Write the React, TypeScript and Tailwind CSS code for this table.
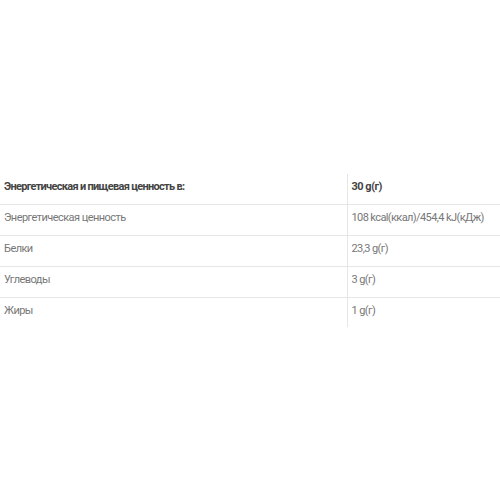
const rows = [
  ["Энергетическая ценность", "108 kcal(ккал)/454,4 kJ(кДж)"],
  ["Белки", "23,3 g(г)"],
  ["Углеводы", "3 g(г)"],
  ["Жиры", "1 g(г)"],
];

export default function App() {
  return (
    <div className="w-[500px] h-[500px] bg-white pt-[174px]" style={{ fontFamily: "Roboto, 'Noto Sans', sans-serif" }}>
      <table className="w-full border-collapse text-[11px] leading-[13px]">
        <tbody>
          <tr className="h-[30px] border-b border-[#e6e6e6]">
            <td className="w-[347px] align-top pl-1 pt-[6px] font-bold text-[#444] tracking-[-0.7px]">
              Энергетическая и пищевая ценность в:
            </td>
            <td className="align-top pl-1 pt-[6px] font-bold text-[#444] border-l border-[#e6e6e6] tracking-[-0.5px]">
              30 g(г)
            </td>
          </tr>
          {rows.map(([name, value], i) => (
            <tr key={name} className={i < rows.length - 1 ? "h-[31px] border-b border-[#e6e6e6]" : "h-[30px]"}>
              <td className="align-top pl-1 pt-[6px] text-[#777] tracking-[-0.55px]">{name}</td>
              <td className="align-top pl-1 pt-[6px] text-[#777] border-l border-[#e6e6e6] tracking-[-0.6px]">{value}</td>
            </tr>
          ))}
        </tbody>
      </table>
    </div>
  );
}
